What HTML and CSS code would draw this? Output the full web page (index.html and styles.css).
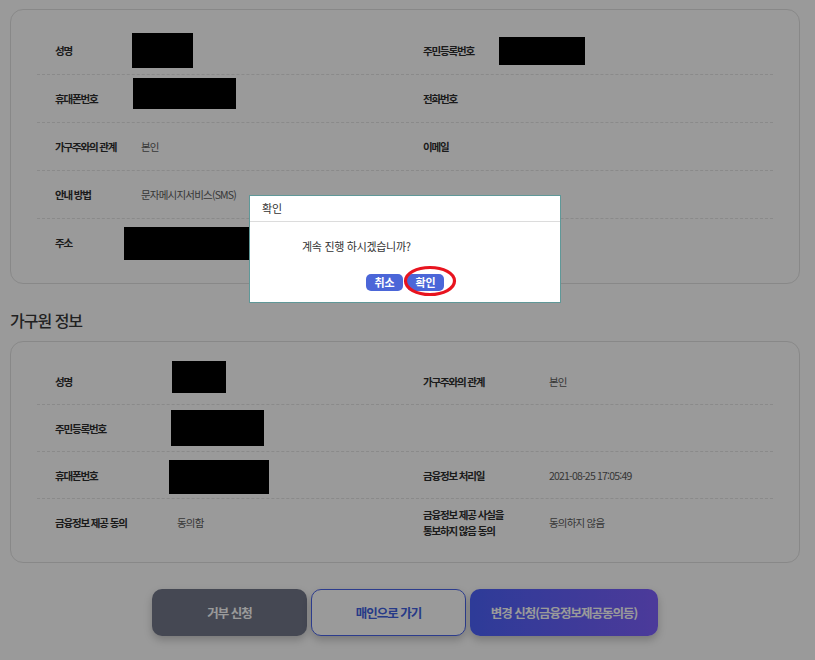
FILE: index.html
```html
<!DOCTYPE html>
<html lang="ko">
<head>
<meta charset="utf-8">
<title>가구원 정보</title>
<link rel="stylesheet" href="styles.css">
</head>
<body>
<div class="page">
  <section class="card card-head">
    <div class="row">
      <div class="lbl">성명</div>
      <div class="val"><span class="redact r1"></span></div>
      <div class="lbl">주민등록번호</div>
      <div class="val"><span class="redact r4"></span></div>
    </div>
    <div class="row">
      <div class="lbl">휴대폰번호</div>
      <div class="val"><span class="redact r2"></span></div>
      <div class="lbl">전화번호</div>
      <div class="val"></div>
    </div>
    <div class="row">
      <div class="lbl">가구주와의 관계</div>
      <div class="val">본인</div>
      <div class="lbl">이메일</div>
      <div class="val"></div>
    </div>
    <div class="row">
      <div class="lbl">안내 방법</div>
      <div class="val">문자메시지서비스(SMS)</div>
      <div class="lbl"></div>
      <div class="val"></div>
    </div>
    <div class="row">
      <div class="lbl">주소</div>
      <div class="val"><span class="redact r3"></span></div>
      <div class="lbl"></div>
      <div class="val"></div>
    </div>
  </section>

  <h2 class="heading">가구원 정보</h2>

  <section class="card card-member">
    <div class="row">
      <div class="lbl">성명</div>
      <div class="val"><span class="redact r5"></span></div>
      <div class="lbl">가구주와의 관계</div>
      <div class="val">본인</div>
    </div>
    <div class="row">
      <div class="lbl">주민등록번호</div>
      <div class="val"><span class="redact r6"></span></div>
      <div class="lbl"></div>
      <div class="val"></div>
    </div>
    <div class="row">
      <div class="lbl">휴대폰번호</div>
      <div class="val"><span class="redact r7"></span></div>
      <div class="lbl">금융정보 처리일</div>
      <div class="val">2021-08-25 17:05:49</div>
    </div>
    <div class="row">
      <div class="lbl">금융정보 제공 동의</div>
      <div class="val">동의함</div>
      <div class="lbl lbl-wrap">금융정보 제공 사실을<br>통보하지 않음 동의</div>
      <div class="val">동의하지 않음</div>
    </div>
  </section>

  <div class="actions">
    <button class="btn btn-gray" type="button">거부 신청</button>
    <button class="btn btn-line" type="button">매인으로 가기</button>
    <button class="btn btn-grad" type="button">변경 신청(금융정보제공동의등)</button>
  </div>
</div>

<div class="overlay"></div>

<div class="dialog">
  <div class="dlg-title">확인</div>
  <div class="dlg-body">
    <p class="dlg-msg">계속 진행 하시겠습니까?</p>
    <div class="dlg-btns">
      <button class="dbtn" type="button">취소</button>
      <button class="dbtn" type="button">확인</button>
    </div>
  </div>
</div>

<svg class="mark" width="60" height="40" viewBox="0 0 60 40">
  <ellipse cx="30" cy="20" rx="24.5" ry="13.5" fill="none" stroke="#e8141f" stroke-width="3.2"/>
</svg>
</body>
</html>
```

FILE: styles.css
```css
* { box-sizing: border-box; }

html, body {
  margin: 0;
  padding: 0;
  background: #ffffff;
}

body {
  font-family: "Noto Sans CJK KR", "Noto Sans", sans-serif;
  color: #333;
  width: 815px;
  height: 660px;
  overflow: hidden;
  position: relative;
}

.page {
  padding: 9px 15px 0 10px;
}

.card {
  border: 1px solid #e2e2e2;
  border-radius: 13px;
  padding: 17px 26px;
}

.row {
  display: grid;
  align-items: center;
  height: 48px;
  padding-left: 18px;
  border-bottom: 1px dashed #e4e4e4;
}
.row:last-child { border-bottom: none; height: 47px; }

.card-head .row { grid-template-columns: 86px 282px 76px 1fr; }
.card-member { padding: 16px 26px; }
.card-member .row { grid-template-columns: 122px 246px 126px 1fr; height: 47px; }
.card-member .row:last-child { height: 47px; }

.lbl {
  font-size: 10.5px;
  font-weight: 700;
  letter-spacing: -1.15px;
  color: #2e2e2e;
  white-space: nowrap;
}
.lbl-wrap { line-height: 1.45; }

.val {
  font-size: 10.5px;
  letter-spacing: -0.8px;
  color: #5c5c5c;
  white-space: nowrap;
}

.redact {
  display: block;
  background: #000;
}
.r1 { width: 61px; height: 35px; margin-left: -9px; }
.r2 { width: 103px; height: 31px; margin-left: -8px; margin-top: -11px; }
.r3 { width: 130px; height: 33px; margin-left: -17px; margin-top: 2px; }
.r4 { width: 86px; height: 28px; }
.r5 { width: 54px; height: 32px; margin-left: -5px; margin-top: -9px; }
.r6 { width: 93px; height: 36px; margin-left: -6px; }
.r7 { width: 100px; height: 34px; margin-left: -8px; margin-top: 3px; }

.heading {
  margin: 24px 0 9px;
  font-size: 16px;
  line-height: 24px;
  font-weight: 500;
  letter-spacing: -1px;
  color: #383838;
}

.actions {
  display: flex;
  justify-content: center;
  gap: 4px;
  margin-top: 26px;
}

.btn {
  height: 47px;
  border-radius: 10px;
  font-family: inherit;
  font-size: 12.5px;
  font-weight: 700;
  letter-spacing: -1px;
  padding: 0;
  cursor: pointer;
  box-shadow: 0 4px 8px rgba(0, 0, 0, 0.22);
}
.btn-gray {
  width: 155px;
  background: #72778a;
  color: #fff;
  border: none;
}
.btn-line {
  width: 155px;
  background: #fff;
  color: #4060e0;
  border: 1px solid #4a64ea;
}
.btn-grad {
  width: 188px;
  background: linear-gradient(90deg, #4c62fc, #7e61ff);
  color: #fff;
  border: none;
}

.overlay {
  position: absolute;
  inset: 0;
  background: rgba(0, 0, 0, 0.395);
}

.dialog {
  position: absolute;
  left: 249px;
  top: 195px;
  width: 312px;
  height: 108px;
  background: #fff;
  border: 1px solid #5f9898;
}

.dlg-title {
  height: 26px;
  padding-left: 12px;
  font-size: 11px;
  line-height: 25px;
  color: #333;
  border-bottom: 1px solid #dcdcdc;
}

.dlg-body {
  padding: 16px 0 0;
}

.dlg-msg {
  margin: 0 0 0 52px;
  font-size: 11px;
  line-height: 16px;
  color: #333;
  letter-spacing: -0.3px;
}

.dlg-btns {
  display: flex;
  justify-content: center;
  gap: 4px;
  margin-top: 20px;
}

.dbtn {
  width: 37px;
  height: 17px;
  padding: 0;
  border: none;
  border-radius: 5px;
  background: #4b66d8;
  color: #fff;
  font-family: inherit;
  font-size: 11px;
  font-weight: 700;
  line-height: 17px;
}

.mark {
  position: absolute;
  left: 400px;
  top: 261px;
}
```
